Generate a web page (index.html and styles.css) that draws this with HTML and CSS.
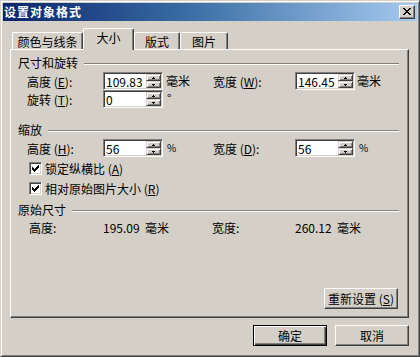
FILE: index.html
```html
<!DOCTYPE html>
<html lang="zh-CN">
<head>
<meta charset="utf-8">
<title>设置对象格式</title>
<link rel="stylesheet" href="styles.css">
</head>
<body>
<div class="window">
  <div class="titlebar">
    <span class="title">设置对象格式</span>
    <span class="close"><svg width="8" height="7" viewBox="0 0 8 7" shape-rendering="crispEdges"><path fill="#000" d="M0 0h2v1H0zM6 0h2v1H6zM1 1h2v1H1zM5 1h2v1H5zM2 2h4v1H2zM3 3h2v1H3zM2 4h4v1H2zM1 5h2v1H1zM5 5h2v1H5zM0 6h2v1H0zM6 6h2v1H6z"/></svg></span>
  </div>

  <div class="tabs">
    <div class="tab t1">颜色与线条</div>
    <div class="tab sel">大小</div>
    <div class="tab t3">版式</div>
    <div class="tab t4">图片</div>
  </div>

  <div class="panel">
    <div class="group-head">尺寸和旋转</div>
    <div class="row r1">
      <span class="lbl">高度 (<u>E</u>):</span>
      <span class="field"><span class="val">109.83</span><span class="spin"><span class="up"><svg width="3" height="2" viewBox="0 0 3 2" shape-rendering="crispEdges"><path d="M1 0h1v1H1zM0 1h3v1H0z"/></svg></span><span class="dn"><svg width="3" height="2" viewBox="0 0 3 2" shape-rendering="crispEdges"><path d="M0 0h3v1H0zM1 1h1v1H1z"/></svg></span></span></span>
      <span class="unit">毫米</span>
      <span class="lbl">宽度 (<u>W</u>):</span>
      <span class="field"><span class="val">146.45</span><span class="spin"><span class="up"><svg width="3" height="2" viewBox="0 0 3 2" shape-rendering="crispEdges"><path d="M1 0h1v1H1zM0 1h3v1H0z"/></svg></span><span class="dn"><svg width="3" height="2" viewBox="0 0 3 2" shape-rendering="crispEdges"><path d="M0 0h3v1H0zM1 1h1v1H1z"/></svg></span></span></span>
      <span class="unit u2">毫米</span>
    </div>
    <div class="row r2">
      <span class="lbl">旋转 (<u>T</u>):</span>
      <span class="field"><span class="val">0</span><span class="spin"><span class="up"><svg width="3" height="2" viewBox="0 0 3 2" shape-rendering="crispEdges"><path d="M1 0h1v1H1zM0 1h3v1H0z"/></svg></span><span class="dn"><svg width="3" height="2" viewBox="0 0 3 2" shape-rendering="crispEdges"><path d="M0 0h3v1H0zM1 1h1v1H1z"/></svg></span></span></span>
      <span class="unit deg">°</span>
    </div>

    <div class="group-head g2">缩放</div>
    <div class="row r3">
      <span class="lbl">高度 (<u>H</u>):</span>
      <span class="field"><span class="val">56</span><span class="spin"><span class="up"><svg width="3" height="2" viewBox="0 0 3 2" shape-rendering="crispEdges"><path d="M1 0h1v1H1zM0 1h3v1H0z"/></svg></span><span class="dn"><svg width="3" height="2" viewBox="0 0 3 2" shape-rendering="crispEdges"><path d="M0 0h3v1H0zM1 1h1v1H1z"/></svg></span></span></span>
      <span class="unit pct">%</span>
      <span class="lbl">宽度 (<u>D</u>):</span>
      <span class="field"><span class="val">56</span><span class="spin"><span class="up"><svg width="3" height="2" viewBox="0 0 3 2" shape-rendering="crispEdges"><path d="M1 0h1v1H1zM0 1h3v1H0z"/></svg></span><span class="dn"><svg width="3" height="2" viewBox="0 0 3 2" shape-rendering="crispEdges"><path d="M0 0h3v1H0zM1 1h1v1H1z"/></svg></span></span></span>
      <span class="unit u2 pct">%</span>
    </div>
    <label class="check c1"><span class="cb"><svg width="7" height="7" viewBox="0 0 7 7" shape-rendering="crispEdges"><path d="M6 0h1v1H6zM5 1h2v1H5zM0 2h1v1H0zM4 2h3v1H4zM0 3h2v1H0zM3 3h3v1H3zM0 4h5v1H0zM1 5h3v1H1zM2 6h1v1H2z"/></svg></span><span>锁定纵横比 (<u>A</u>)</span></label>
    <label class="check c2"><span class="cb"><svg width="7" height="7" viewBox="0 0 7 7" shape-rendering="crispEdges"><path d="M6 0h1v1H6zM5 1h2v1H5zM0 2h1v1H0zM4 2h3v1H4zM0 3h2v1H0zM3 3h3v1H3zM0 4h5v1H0zM1 5h3v1H1zM2 6h1v1H2z"/></svg></span><span>相对原始图片大小 (<u>R</u>)</span></label>

    <div class="group-head g3">原始尺寸</div>
    <div class="orig">
      <span>高度:</span>
      <span>195.09</span>
      <span>毫米</span>
      <span>宽度:</span>
      <span>260.12</span>
      <span>毫米</span>
    </div>

    <div class="reset-wrap">
      <span class="btn">重新设置 (<u>S</u>)</span>
    </div>
  </div>

  <div class="footer">
    <span class="btn default">确定</span>
    <span class="btn">取消</span>
  </div>
</div>
</body>
</html>
```

FILE: styles.css
```css
html, body {
  margin: 0;
  padding: 0;
  background: #D4D0C8;
}
body {
  width: 420px;
  height: 357px;
  font-family: "Noto Sans CJK SC", "Liberation Sans", sans-serif;
  font-size: 12px;
  line-height: 12px;
  color: #000;
}
u { text-decoration: underline; text-underline-offset: 1px; }

.window {
  box-sizing: border-box;
  width: 420px;
  height: 357px;
  background: #D4D0C8;
  border: 1px solid;
  border-color: #D4D0C8 #404040 #404040 #D4D0C8;
  box-shadow: inset 1px 1px #fff, inset -1px -1px #808080;
  padding: 2px;
  display: flex;
  flex-direction: column;
}

.titlebar {
  height: 18px;
  flex: none;
  background: linear-gradient(to right, #0A246A 0%, #3A6EA5 45%, #A6CAF0 100%);
  display: flex;
  align-items: center;
  justify-content: space-between;
  padding: 0 2px 0 1px;
}
.title {
  color: #fff;
  font-weight: bold;
  letter-spacing: 1px;
  line-height: 12px;
}
.close {
  box-sizing: border-box;
  width: 16px;
  height: 14px;
  background: #D4D0C8;
  border: 1px solid;
  border-color: #fff #404040 #404040 #fff;
  box-shadow: inset -1px -1px #808080;
  display: flex;
  align-items: center;
  justify-content: center;
  padding-bottom: 1px;
}

.tabs {
  flex: none;
  height: 21px;
  margin-top: 7px;
  margin-left: 9px;
  display: flex;
  align-items: flex-end;
  position: relative;
  z-index: 2;
}
.tab {
  box-sizing: border-box;
  height: 17px;
  border: 1px solid #fff;
  border-bottom: none;
  border-right-color: #404040;
  border-radius: 2px 2px 0 0;
  box-shadow: inset -1px 0 #808080;
  background: #D4D0C8;
  display: flex;
  align-items: center;
  justify-content: center;
  padding-top: 1px;
}
.t1 { width: 71px; }
.sel {
  width: 51px;
  height: 22px;
  margin-bottom: -1px;
  padding-top: 0;
  padding-bottom: 4px;
}
.t3 { width: 46px; }
.t4 { width: 48px; }

.panel {
  box-sizing: border-box;
  flex: none;
  width: 399px;
  height: 269px;
  margin-left: 7px;
  border: 1px solid;
  border-color: #fff #404040 #404040 #fff;
  box-shadow: inset -1px -1px #808080;
  padding: 7px 9px 8px 7px;
  display: flex;
  flex-direction: column;
  position: relative;
  z-index: 1;
}

.group-head {
  display: flex;
  align-items: center;
  gap: 6px;
  height: 12px;
  line-height: 12px;
}
.group-head::after {
  content: "";
  flex: 1;
  height: 0;
  border-top: 1px solid #808080;
  border-bottom: 1px solid #fff;
  margin-top: 1px;
}
.g2 { margin-top: 16px; }
.g3 { margin-top: 9px; }

.row {
  display: grid;
  grid-template-columns: 76px 60px 50px 82px 60px auto;
  align-items: center;
  height: 18px;
  padding-left: 9px;
}
.r1 { margin-top: 3px; }
.r2 { margin-top: 0; }
.r3 { margin-top: 3px; }
.lbl { line-height: 12px; padding-top: 1px; }
.unit { padding-left: 3px; line-height: 12px; }
.u2 { padding-left: 2px; }
.deg { align-self: start; padding-top: 2px; padding-left: 4px; }
.pct { font-size: 10px; padding-left: 4px; }

.field {
  box-sizing: border-box;
  width: 60px;
  height: 18px;
  border: 1px solid;
  border-color: #808080 #fff #fff #808080;
  box-shadow: inset 1px 1px #404040, inset -1px -1px #D4D0C8;
  background: #fff;
  padding: 1px;
  display: flex;
}
.val {
  flex: 1;
  line-height: 14px;
  padding-left: 1px;
  padding-top: 1px;
}
.spin {
  width: 15px;
  display: flex;
  flex-direction: column;
}
.spin > span {
  box-sizing: border-box;
  flex: 1;
  background: #D4D0C8;
  border: 1px solid;
  border-color: #D4D0C8 #404040 #404040 #D4D0C8;
  box-shadow: inset 1px 1px #fff, inset -1px -1px #808080;
  display: flex;
  align-items: center;
  justify-content: center;
}

.check {
  display: flex;
  align-items: center;
  gap: 3px;
  height: 13px;
  padding-left: 11px;
  line-height: 12px;
}
.c1 { margin-top: 5px; }
.c2 { margin-top: 7px; }
.cb {
  box-sizing: border-box;
  width: 13px;
  height: 13px;
  border: 1px solid;
  border-color: #808080 #fff #fff #808080;
  box-shadow: inset 1px 1px #404040, inset -1px -1px #D4D0C8;
  background: #fff;
  display: flex;
  align-items: center;
  justify-content: center;
}

.orig {
  display: grid;
  grid-template-columns: 74px 42px 67px 83px 42px auto;
  margin-top: 6px;
  padding-left: 11px;
  height: 12px;
  line-height: 12px;
}

.reset-wrap {
  margin-top: auto;
  display: flex;
  justify-content: flex-end;
  padding-right: 1px;
}

.btn {
  box-sizing: border-box;
  width: 74px;
  height: 21px;
  background: #D4D0C8;
  border: 1px solid;
  border-color: #fff #404040 #404040 #fff;
  box-shadow: inset -1px -1px #808080;
  display: flex;
  align-items: center;
  justify-content: center;
  line-height: 12px;
}
.btn.default {
  border-color: #000;
  box-shadow: inset 1px 1px #fff, inset -1px -1px #404040, inset -2px -2px #808080;
}

.footer {
  display: flex;
  justify-content: flex-end;
  gap: 8px;
  margin-top: 7px;
  padding-right: 8px;
}
```
